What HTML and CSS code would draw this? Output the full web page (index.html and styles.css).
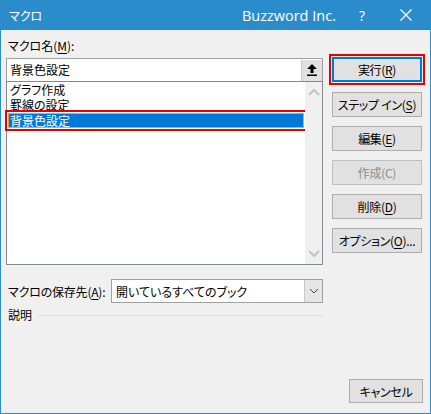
FILE: index.html
```html
<!DOCTYPE html>
<html lang="ja">
<head>
    <meta charset="UTF-8">
    <meta name="viewport" content="width=device-width, initial-scale=1.0">
    <link rel="stylesheet" href="styles.css">
    <title>マクロ</title>
</head>
<body>
    <div class="window">
        <!-- タイトルバー -->
        <div class="titlebar">
            <span class="titlebar__name">マクロ</span>
            <span class="titlebar__brand">Buzzword Inc.</span>
            <span class="titlebar__help">?</span>
            <span class="titlebar__close">
                <svg width="12" height="12" viewBox="0 0 12 12"><path d="M0.5 0.5 L11.5 11.5 M11.5 0.5 L0.5 11.5" stroke="#fff" stroke-width="1.2" fill="none"/></svg>
            </span>
        </div>

        <div class="content">
            <div class="main">
                <div class="label">マクロ名(<u>M</u>):</div>
                <div class="namebox">
                    <span class="namebox__text">背景色設定</span>
                    <span class="namebox__btn">
                        <svg width="10" height="12" viewBox="0 0 10 12"><path d="M5 0 L10 5 L6.5 5 L6.5 9 L3.5 9 L3.5 5 L0 5 Z" fill="#000"/><rect x="0" y="10.5" width="10" height="1.5" fill="#000"/></svg>
                    </span>
                </div>
                <div class="list">
                    <div class="list__items">
                        <div class="list__item">グラフ作成</div>
                        <div class="list__item">罫線の設定</div>
                        <div class="list__item list__item--selected">背景色設定</div>
                    </div>
                    <div class="list__scroll">
                        <svg width="12" height="8" viewBox="0 0 12 8"><polyline points="1,7 6,2 11,7" stroke="#c4c4c4" stroke-width="2" fill="none"/></svg>
                        <svg width="12" height="8" viewBox="0 0 12 8"><polyline points="1,1 6,6 11,1" stroke="#c4c4c4" stroke-width="2" fill="none"/></svg>
                    </div>
                </div>

                <div class="location">
                    <span class="location__label">マクロの保存先(<u>A</u>):</span>
                    <div class="combo">
                        <span class="combo__text">開いているすべてのブック</span>
                        <span class="combo__btn">
                            <svg width="10" height="6" viewBox="0 0 10 6"><polyline points="1,1 5,5 9,1" stroke="#444" stroke-width="1" fill="none"/></svg>
                        </span>
                    </div>
                </div>

                <div class="desc">
                    <span>説明</span>
                    <span class="desc__line"></span>
                </div>
            </div>

            <div class="side">
                <button class="btn btn--default">実行(<u>R</u>)</button>
                <button class="btn">ステップ イン(<u>S</u>)</button>
                <button class="btn">編集(<u>E</u>)</button>
                <button class="btn btn--disabled">作成(C)</button>
                <button class="btn">削除(<u>D</u>)</button>
                <button class="btn">オプション(<u>O</u>)...</button>
            </div>

            <div class="footer">
                <button class="btn btn--cancel">キャンセル</button>
            </div>
        </div>
    </div>
</body>
</html>
```

FILE: styles.css
```css
/* 全体 */
body {
    margin: 0;
    padding: 0;
    font-family: "Noto Sans CJK JP", "Noto Sans", sans-serif;
    font-size: 12px;
    font-feature-settings: "palt";
    color: #000;
}

.window {
    width: 431px;
    height: 414px;
    box-sizing: border-box;
    border: 1px solid #2b8ccc;
    border-top: none;
    background: #f0f0f0;
    display: flex;
    flex-direction: column;
}

/* タイトルバー */
.titlebar {
    height: 30px;
    margin: 0 -1px;
    background: #2b8ccc;
    color: #fff;
    display: flex;
    align-items: center;
    flex-shrink: 0;
}

.titlebar__name {
    margin-left: 9px;
    font-size: 12px;
    flex: 1;
}

.titlebar__brand {
    font-family: "Open Sans", "Noto Sans", sans-serif;
    font-size: 14.5px;
}

.titlebar__help {
    font-family: "Open Sans", sans-serif;
    font-size: 14px;
    margin-left: 23px;
}

.titlebar__close {
    display: flex;
    margin-left: 35px;
    margin-right: 19px;
}

/* 本体 */
.content {
    flex: 1;
    display: grid;
    grid-template-columns: 317px 90px;
    grid-template-rows: auto 1fr;
    column-gap: 9px;
    padding: 0 8px 10px 5px;
}

.main {
    display: flex;
    flex-direction: column;
    padding-top: 8px;
}

.label {
    line-height: 16px;
    margin-bottom: 4px;
    padding-left: 2px;
}

u {
    text-decoration-thickness: 1px;
    text-underline-offset: 2px;
}

/* マクロ名 */
.namebox {
    height: 23px;
    box-sizing: border-box;
    border: 1px solid #a0a0a0;
    border-bottom: none;
    background: #fff;
    display: flex;
    align-items: center;
}

.namebox__text {
    flex: 1;
    padding-left: 3px;
    line-height: 16px;
}

.namebox__btn {
    width: 20px;
    height: 21px;
    background: #e1e1e1;
    border-left: 1px solid #c8c8c8;
    display: flex;
    align-items: center;
    justify-content: center;
}

/* リスト */
.list {
    height: 184px;
    box-sizing: border-box;
    border: 1px solid #828790;
    background: #fff;
    display: flex;
}

.list__items {
    flex: 1;
    padding: 0 1px;
}

.list__item {
    line-height: 15px;
    height: 15px;
    padding-left: 2px;
}

.list__item--selected {
    margin-top: 1px;
    background: #0078d7;
    color: #fff;
    box-shadow: inset 0 0 0 1px #ff9a3c;
    outline: 2px solid #e60000;
    outline-offset: 1px;
}

.list__scroll {
    width: 17px;
    background: #f0f0f0;
    display: flex;
    flex-direction: column;
    justify-content: space-between;
    align-items: center;
    padding: 6px 0;
}

/* 保存先 */
.location {
    display: flex;
    align-items: center;
    margin-top: 14px;
}

.location__label {
    width: 103px;
    flex-shrink: 0;
    padding-left: 2px;
    white-space: nowrap;
    letter-spacing: -0.2px;
}

.combo {
    flex: 1;
    height: 24px;
    box-sizing: border-box;
    border: 1px solid #a0a0a0;
    background: #fff;
    display: flex;
    align-items: center;
}

.combo__text {
    flex: 1;
    padding-left: 4px;
}

.combo__btn {
    width: 17px;
    height: 22px;
    background: #e5e5e5;
    border-left: 1px solid #c8c8c8;
    display: flex;
    align-items: center;
    justify-content: center;
}

/* 説明 */
.desc {
    display: flex;
    align-items: center;
    margin-top: 3px;
    padding-left: 2px;
    line-height: 18px;
}

.desc__line {
    flex: 1;
    height: 1px;
    background: #dcdcdc;
    margin-left: 6px;
}

/* ボタン */
.side {
    display: flex;
    flex-direction: column;
    gap: 9px;
    padding-top: 27px;
}

.btn {
    font-family: inherit;
    font-size: 12px;
    font-feature-settings: "palt";
    letter-spacing: -0.3px;
    white-space: nowrap;
    color: #000;
    height: 25px;
    padding: 0;
    background: #e1e1e1;
    border: 1px solid #adadad;
    box-sizing: border-box;
}

.btn--default {
    border: 2px solid #0078d7;
    outline: 2px solid #e60000;
    outline-offset: 1px;
    margin-bottom: 1px;
}

.btn--disabled {
    color: #8c8c8c;
    border-color: #bfbfbf;
}

.footer {
    grid-column: 1 / 3;
    display: flex;
    justify-content: flex-end;
    align-items: flex-end;
}

.btn--cancel {
    width: 74px;
    height: 24px;
    margin-right: -1px;
}
```
